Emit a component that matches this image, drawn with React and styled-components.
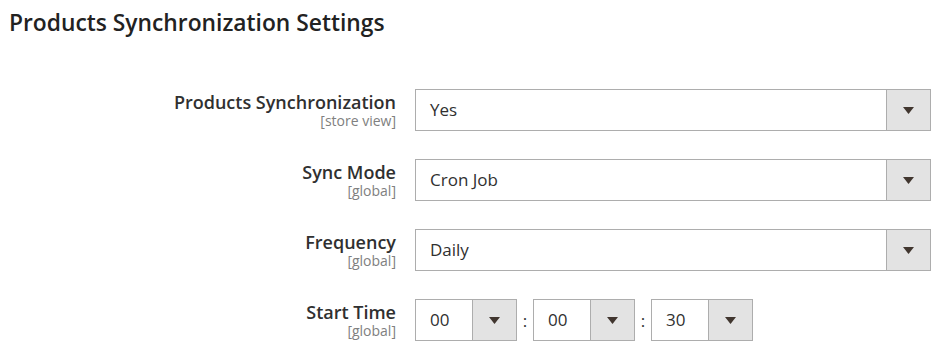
import React from "react";
import styled, { createGlobalStyle } from "styled-components";

const Global = createGlobalStyle`
  html, body { margin: 0; padding: 0; background: #fff; }
  body { font-family: "Open Sans", "Noto Sans", sans-serif; color: #303030; }
`;

const Page = styled.div`
  padding: 7px 0 0 9px;
`;

const Title = styled.h2`
  margin: 0;
  font-size: 22.8px;
  font-weight: 600;
  line-height: 31px;
  color: #222;
`;

const Form = styled.div`
  display: flex;
  flex-direction: column;
  gap: 28px;
  margin-top: 51px;
`;

const Row = styled.div`
  display: flex;
  align-items: flex-start;
`;

const LabelCol = styled.div`
  width: 387px;
  text-align: right;
  padding-top: 1px;
  flex: none;
`;

const Label = styled.div`
  font-size: 18px;
  font-weight: 600;
  line-height: 24px;
  color: #303030;
`;

const Scope = styled.div`
  font-size: 14px;
  line-height: 14px;
  color: #808080;
`;

const Control = styled.div`
  margin-left: 19px;
  display: flex;
  align-items: center;
`;

const SelectBox = styled.div`
  box-sizing: border-box;
  width: ${(p) => p.$w}px;
  height: 42px;
  border: 1px solid #adadad;
  display: flex;
  background: #fff;
`;

const Value = styled.div`
  flex: 1;
  padding-left: 14px;
  font-size: 17px;
  line-height: 40px;
  color: #303030;
`;

const Arrow = styled.div`
  width: 43px;
  flex: none;
  background: #e3e3e3;
  border-left: 1px solid #adadad;
  display: flex;
  align-items: center;
  justify-content: center;
`;

const Colon = styled.span`
  width: 16px;
  text-align: center;
  font-size: 17px;
  color: #303030;
`;

const Tri = () => (
  <svg width="11" height="7" viewBox="0 0 11 7">
    <path d="M0 0 H11 L5.5 7 Z" fill="#41362f" />
  </svg>
);

const Select = ({ value, w }) => (
  <SelectBox $w={w}>
    <Value>{value}</Value>
    <Arrow>
      <Tri />
    </Arrow>
  </SelectBox>
);

const rows = [
  { label: "Products Synchronization", scope: "[store view]", value: "Yes" },
  { label: "Sync Mode", scope: "[global]", value: "Cron Job" },
  { label: "Frequency", scope: "[global]", value: "Daily" },
];

export default function App() {
  return (
    <>
      <Global />
      <Page>
        <Title>Products Synchronization Settings</Title>
        <Form>
          {rows.map((r) => (
            <Row key={r.label}>
              <LabelCol>
                <Label>{r.label}</Label>
                <Scope>{r.scope}</Scope>
              </LabelCol>
              <Control>
                <Select value={r.value} w={516} />
              </Control>
            </Row>
          ))}
          <Row>
            <LabelCol>
              <Label>Start Time</Label>
              <Scope>[global]</Scope>
            </LabelCol>
            <Control>
              <Select value="00" w={102} />
              <Colon>:</Colon>
              <Select value="00" w={102} />
              <Colon>:</Colon>
              <Select value="30" w={102} />
            </Control>
          </Row>
        </Form>
      </Page>
    </>
  );
}
